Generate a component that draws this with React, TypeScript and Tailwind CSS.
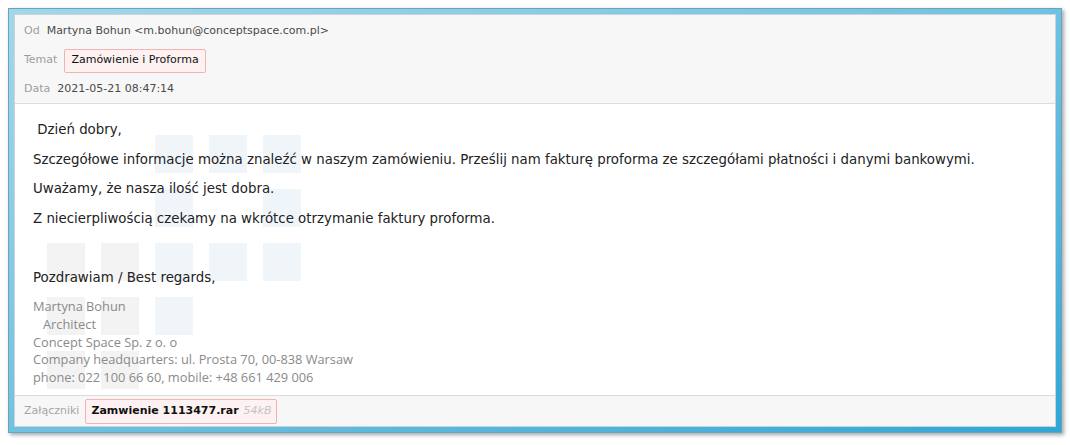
const header = [
  { label: "Od", value: "Martyna Bohun <m.bohun@conceptspace.com.pl>" },
  { label: "Temat", value: "Zamówienie i Proforma", pill: true },
  { label: "Data", value: "2021-05-21 08:47:14" },
];

const paragraphs = [
  "\u00a0Dzień dobry,",
  "Szczegółowe informacje można znaleźć w naszym zamówieniu. Prześlij nam fakturę proforma ze szczegółami płatności i danymi bankowymi.",
  "Uważamy, że nasza ilość jest dobra.",
  "Z niecierpliwością czekamy na wkrótce otrzymanie faktury proforma.",
  "\u00a0",
  "Pozdrawiam / Best regards,",
];

const signature = [
  "Martyna Bohun",
  "\u00a0\u00a0\u00a0Architect",
  "Concept Space Sp. z o. o",
  "Company headquarters: ul. Prosta 70, 00-838 Warsaw",
  "phone: 022 100 66 60, mobile: +48 661 429 006",
];

// faint logo squares behind the message body: [col, row, tone]
const squares: [number, number, "b" | "g"][] = [
  [2, 0, "b"], [3, 0, "b"], [4, 0, "b"],
  [2, 1, "b"], [4, 1, "b"],
  [0, 2, "g"], [1, 2, "g"], [2, 2, "b"], [3, 2, "b"], [4, 2, "b"],
  [0, 3, "g"], [1, 3, "g"], [2, 3, "b"],
  [0, 4, "g"], [1, 4, "g"],
];

function Watermark() {
  return (
    <svg className="absolute left-0 top-0 pointer-events-none" width="320" height="300">
      {squares.map(([c, r, t]) => (
        <rect
          key={`${c}-${r}`}
          x={32 + c * 54}
          y={31 + r * 54}
          width="38"
          height="38"
          fill={t === "b" ? "#f0f5fa" : "#f3f3f3"}
        />
      ))}
    </svg>
  );
}

export default function App() {
  return (
    <div className="w-[1070px] h-[445px] bg-white p-2 font-['DejaVu_Sans',Verdana,sans-serif]">
      {/* blue window frame */}
      <div className="w-[1054px] h-[425px] border border-[#6aa3bb] bg-gradient-to-br from-[#a3d7ea] via-[#70c2e1] to-[#2ea7d6] p-[5px] shadow-[2px_2px_4px_rgba(0,0,0,0.35)]">
        <div className="h-full flex flex-col border border-[#c9d3d8] bg-white">
          {/* headers */}
          <div className="h-[89px] pt-[2px] bg-[#f7f7f7] border-b border-[#dcdcdc] px-[9px] text-[11px]">
            {header.map((h) => (
              <div key={h.label} className="h-[29px] flex items-center gap-[7px]">
                <span className="text-[#9d9d9d]">{h.label}</span>
                {h.pill ? (
                  <span className="h-[24px] px-[6px] flex items-center border border-[#f2b3b3] bg-[#fdf1f1] rounded-[2px] text-[#111]">
                    {h.value}
                  </span>
                ) : (
                  <span className="text-[#4a4a4a]">{h.value}</span>
                )}
              </div>
            ))}
          </div>

          {/* body */}
          <div className="relative flex-1 px-[18px] pt-[17px] text-[13.35px] text-[#222]">
            <Watermark />
            <div className="relative">
              {paragraphs.map((p, i) => (
                <p key={i} className="leading-[17px] mb-[12.5px] whitespace-pre">
                  {p}
                </p>
              ))}
              <div className="mt-[2px] font-['Open_Sans',sans-serif] text-[12.8px] leading-[17.75px] text-[#8a8a8a] whitespace-pre">
                {signature.map((s) => (
                  <div key={s}>{s}</div>
                ))}
              </div>
            </div>
          </div>

          {/* attachments */}
          <div className="h-[31px] border-t border-[#dcdcdc] bg-[#f7f7f7] px-[9px] flex items-center gap-[6px]">
            <span className="text-[11px] text-[#a5a5a5]">Załączniki</span>
            <span className="h-[25px] pl-[5px] pr-[4px] flex items-center gap-[5px] border border-[#f2b3b3] bg-[#fdf1f1] rounded-[2px]">
              <span className="text-[11px] font-bold text-[#111]">Zamwienie 1113477.rar</span>
              <span className="text-[11px] italic text-[#c4c4c4]">54kB</span>
            </span>
          </div>
        </div>
      </div>
    </div>
  );
}
